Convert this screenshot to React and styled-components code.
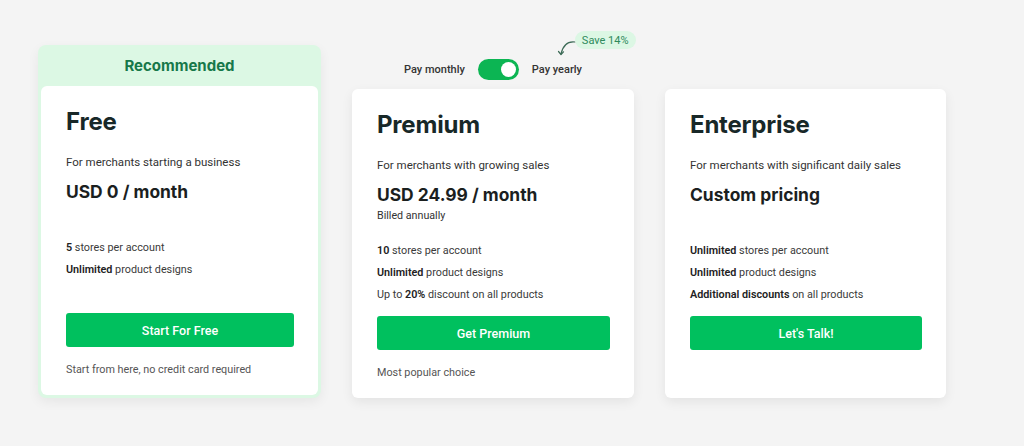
import React from "react";
import styled, { createGlobalStyle } from "styled-components";

const plans = [
  {
    name: "Free",
    blurb: "For merchants starting a business",
    price: "USD 0 / month",
    billing: null,
    features: [
      [<b key="b">5</b>, " stores per account"],
      [<b key="b">Unlimited</b>, " product designs"],
    ],
    cta: "Start For Free",
    note: "Start from here, no credit card required",
  },
  {
    name: "Premium",
    blurb: "For merchants with growing sales",
    price: "USD 24.99 / month",
    billing: "Billed annually",
    features: [
      [<b key="b">10</b>, " stores per account"],
      [<b key="b">Unlimited</b>, " product designs"],
      ["Up to ", <b key="b">20%</b>, " discount on all products"],
    ],
    cta: "Get Premium",
    note: "Most popular choice",
  },
  {
    name: "Enterprise",
    blurb: "For merchants with significant daily sales",
    price: "Custom pricing",
    billing: null,
    features: [
      [<b key="b">Unlimited</b>, " stores per account"],
      [<b key="b">Unlimited</b>, " product designs"],
      [<b key="b">Additional discounts</b>, " on all products"],
    ],
    cta: "Let's Talk!",
    note: null,
  },
];

const PlanCard = ({ plan }) => (
  <Card>
    <PlanName>{plan.name}</PlanName>
    <Blurb>{plan.blurb}</Blurb>
    <PriceBlock>
      <Price>{plan.price}</Price>
      {plan.billing && <Billing>{plan.billing}</Billing>}
    </PriceBlock>
    <Features>
      {plan.features.map((f, i) => (
        <Feature key={i}>{f}</Feature>
      ))}
    </Features>
    <CtaButton>{plan.cta}</CtaButton>
    <Note>{plan.note || "\u00a0"}</Note>
  </Card>
);

const App = () => {
  return (
    <>
      <GlobalStyle />
      <Page>
        <Column>
          <Recommended>
            <RecommendedLabel>Recommended</RecommendedLabel>
            <PlanCard plan={plans[0]} />
          </Recommended>
        </Column>

        <Column>
          <BillingToggle>
            <ToggleLabel>Pay monthly</ToggleLabel>
            <Switch>
              <Knob />
            </Switch>
            <YearlyLabel>
              Pay yearly
              <SaveArrow width="24" height="20" viewBox="0 0 24 20">
                <path
                  d="M21 3 C 13 2, 9 6, 7 15"
                  fill="none"
                  stroke="#3d6b57"
                  strokeWidth="1.2"
                  strokeLinecap="round"
                />
                <path
                  d="M4.5 12.5 L7 15.5 L9.5 12.8"
                  fill="none"
                  stroke="#3d6b57"
                  strokeWidth="1.2"
                  strokeLinecap="round"
                  strokeLinejoin="round"
                />
              </SaveArrow>
              <SaveBadge>Save 14%</SaveBadge>
            </YearlyLabel>
          </BillingToggle>
          <PlanCard plan={plans[1]} />
        </Column>

        <Column>
          <PlanCard plan={plans[2]} />
        </Column>
      </Page>
    </>
  );
};

// Styled components

const GlobalStyle = createGlobalStyle`
  html, body {
    margin: 0;
    padding: 0;
    background: #f4f4f4;
    font-family: Roboto, "Liberation Sans", sans-serif;
  }
  b {
    font-weight: 600;
  }
`;

const Page = styled.div`
  display: grid;
  grid-template-columns: 283px 282px 281px;
  column-gap: 31px;
  align-items: end;
  align-content: start;
  padding: 45px 0 49px 38px;
  min-height: 446px;
  box-sizing: border-box;
`;

const Column = styled.div`
  display: flex;
  flex-direction: column;
  justify-content: flex-end;
`;

const Recommended = styled.div`
  background: #dcf8e4;
  border-radius: 8px;
  padding: 0 3px 3px;
  box-shadow: 0 4px 12px rgba(0, 0, 0, 0.06);

  & > div {
    box-shadow: none;
  }
`;

const RecommendedLabel = styled.div`
  height: 41px;
  display: flex;
  align-items: center;
  justify-content: center;
  font-family: Inter, "Liberation Sans", sans-serif;
  font-weight: 700;
  font-size: 15px;
  color: #17784a;
`;

const Card = styled.div`
  background: #fff;
  border-radius: 6px;
  padding: 22px 24px 17px 25px;
  box-shadow: 0 4px 12px rgba(0, 0, 0, 0.07);
  color: #333;
`;

const PlanName = styled.h2`
  margin: 0;
  font-family: Inter, "Liberation Sans", sans-serif;
  font-weight: 700;
  font-size: 24px;
  line-height: 28px;
  letter-spacing: -0.2px;
  color: #182828;
`;

const Blurb = styled.p`
  margin: 18px 0 0;
  font-size: 11.5px;
  line-height: 16px;
  color: #333;
`;

const PriceBlock = styled.div`
  margin-top: 11px;
  min-height: 40px;
`;

const Price = styled.div`
  font-family: Inter, "Liberation Sans", sans-serif;
  font-weight: 700;
  font-size: 17.4px;
  line-height: 22px;
  color: #1b1f1f;
`;

const Billing = styled.div`
  margin-top: 2px;
  font-size: 10.7px;
  line-height: 16px;
  color: #333;
`;

const Features = styled.ul`
  list-style: none;
  margin: 16px 0 0;
  padding: 0;
  min-height: 66px;
`;

const Feature = styled.li`
  font-size: 10.8px;
  line-height: 22px;
  color: #3a3a3a;

  b {
    color: #222;
  }
`;

const CtaButton = styled.button`
  display: block;
  width: 100%;
  height: 34px;
  margin-top: 10px;
  border: none;
  border-radius: 3px;
  background: #00c05e;
  color: #fff;
  font-family: Roboto, "Liberation Sans", sans-serif;
  font-weight: 500;
  font-size: 12.5px;
  cursor: pointer;
`;

const Note = styled.div`
  margin-top: 15px;
  font-size: 10.8px;
  line-height: 16px;
  color: #555;
`;

const BillingToggle = styled.div`
  display: flex;
  align-items: center;
  justify-content: center;
  gap: 13px;
  height: 21px;
  margin-bottom: 9px;
`;

const ToggleLabel = styled.span`
  font-size: 11px;
  font-weight: 500;
  color: #333;
`;

const YearlyLabel = styled(ToggleLabel)`
  position: relative;
`;

const Switch = styled.div`
  width: 41px;
  height: 21px;
  border-radius: 11px;
  background: #0cb553;
  display: flex;
  align-items: center;
  justify-content: flex-end;
  padding: 0 3px;
  box-sizing: border-box;
`;

const Knob = styled.div`
  width: 15px;
  height: 15px;
  border-radius: 50%;
  background: #fff;
`;

const SaveBadge = styled.span`
  position: absolute;
  left: 43px;
  top: -32px;
  height: 18px;
  padding: 0 7px;
  display: flex;
  align-items: center;
  border-radius: 9px;
  background: #dcf7e4;
  color: #2f8a5c;
  font-size: 11px;
  font-weight: 400;
  white-space: nowrap;
`;

const SaveArrow = styled.svg`
  position: absolute;
  left: 22px;
  top: -24px;
`;

export default App;
